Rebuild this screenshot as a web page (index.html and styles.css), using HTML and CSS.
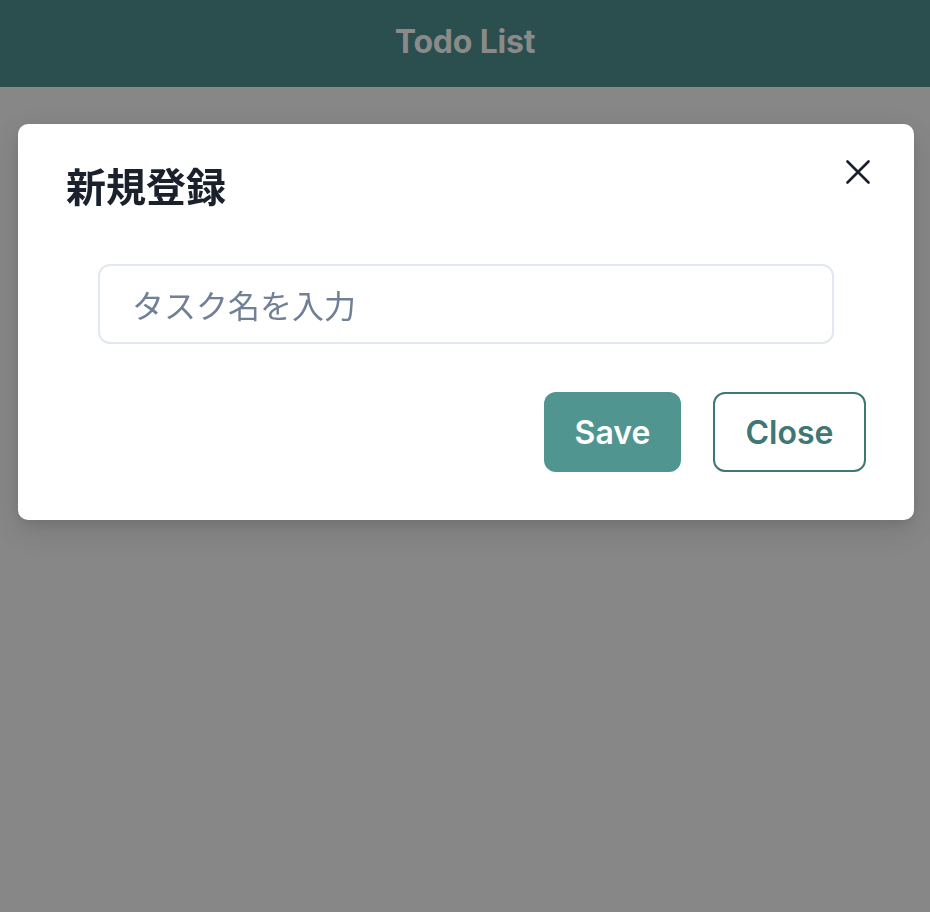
FILE: index.html
```html
<!DOCTYPE html>
<html lang="ja">
<head>
<meta charset="utf-8">
<title>Todo List</title>
<link rel="stylesheet" href="styles.css">
</head>
<body>
<header class="app-header">
  <h1 class="app-title">Todo List</h1>
</header>
<main class="app-main"></main>
<div class="overlay">
  <section class="modal" role="dialog" aria-labelledby="modal-title">
    <div class="modal-header">
      <h2 id="modal-title" class="modal-title">新規登録</h2>
      <button class="close-btn" aria-label="Close">
        <svg viewBox="0 0 24 24" width="24" height="24" aria-hidden="true">
          <path d="M1.5 1.5 L22.5 22.5 M22.5 1.5 L1.5 22.5" stroke="#1a202c" stroke-width="2.6" stroke-linecap="round" fill="none"/>
        </svg>
      </button>
    </div>
    <div class="modal-body">
      <input class="task-input" type="text" placeholder="タスク名を入力">
    </div>
    <div class="modal-footer">
      <button class="btn btn-save">Save</button>
      <button class="btn btn-close">Close</button>
    </div>
  </section>
</div>
</body>
</html>
```

FILE: styles.css
```css
* { box-sizing: border-box; }
html, body { margin: 0; padding: 0; }
body {
  width: 930px;
  height: 912px;
  background: #878787;
  font-family: Inter, "Noto Sans CJK JP", sans-serif;
  overflow: hidden;
}
.app-header {
  height: 87px;
  background: #2b4f4f;
  display: flex;
  align-items: center;
  justify-content: center;
}
.app-title {
  margin: 0;
  font-size: 32px;
  font-weight: 700;
  color: #8a8a8a;
  letter-spacing: -0.2px;
  transform: translateY(-2px);
}
.overlay {
  position: fixed;
  inset: 0;
  display: flex;
  justify-content: flex-start;
  align-items: flex-start;
  padding: 124px 0 0 18px;
}
.modal {
  width: 896px;
  background: #fff;
  border-radius: 10px;
  box-shadow: 0 10px 30px rgba(0,0,0,0.12), 0 4px 12px rgba(0,0,0,0.08);
  position: relative;
}
.modal-header {
  padding: 31px 48px 33px;
}
.modal-title {
  margin: 0;
  font-family: "Noto Sans CJK JP", sans-serif;
  font-size: 40px;
  line-height: 60px;
  font-weight: 700;
  color: #1a202c;
}
.close-btn {
  position: absolute;
  top: 16px;
  right: 24px;
  width: 64px;
  height: 64px;
  border: none;
  background: transparent;
  padding: 0;
  display: flex;
  align-items: center;
  justify-content: center;
  cursor: pointer;
}
.modal-body {
  padding: 16px 80px;
}
.task-input {
  display: block;
  width: 100%;
  height: 80px;
  border: 2px solid #e2e8f0;
  border-radius: 12px;
  padding: 0 32px;
  font-family: "Noto Sans CJK JP", sans-serif;
  font-size: 32px;
  color: #1a202c;
  outline: none;
}
.task-input::placeholder { color: #718096; }
.modal-footer {
  display: flex;
  justify-content: flex-end;
  gap: 32px;
  padding: 32px 48px 48px;
}
.btn {
  height: 80px;
  border-radius: 12px;
  font-family: Inter, sans-serif;
  font-size: 32px;
  font-weight: 600;
  cursor: pointer;
}
.btn-save {
  width: 137px;
  background: #519591;
  color: #fff;
  border: none;
}
.btn-close {
  width: 153px;
  background: #fff;
  color: #3e7773;
  border: 2px solid #3e7773;
}
```
